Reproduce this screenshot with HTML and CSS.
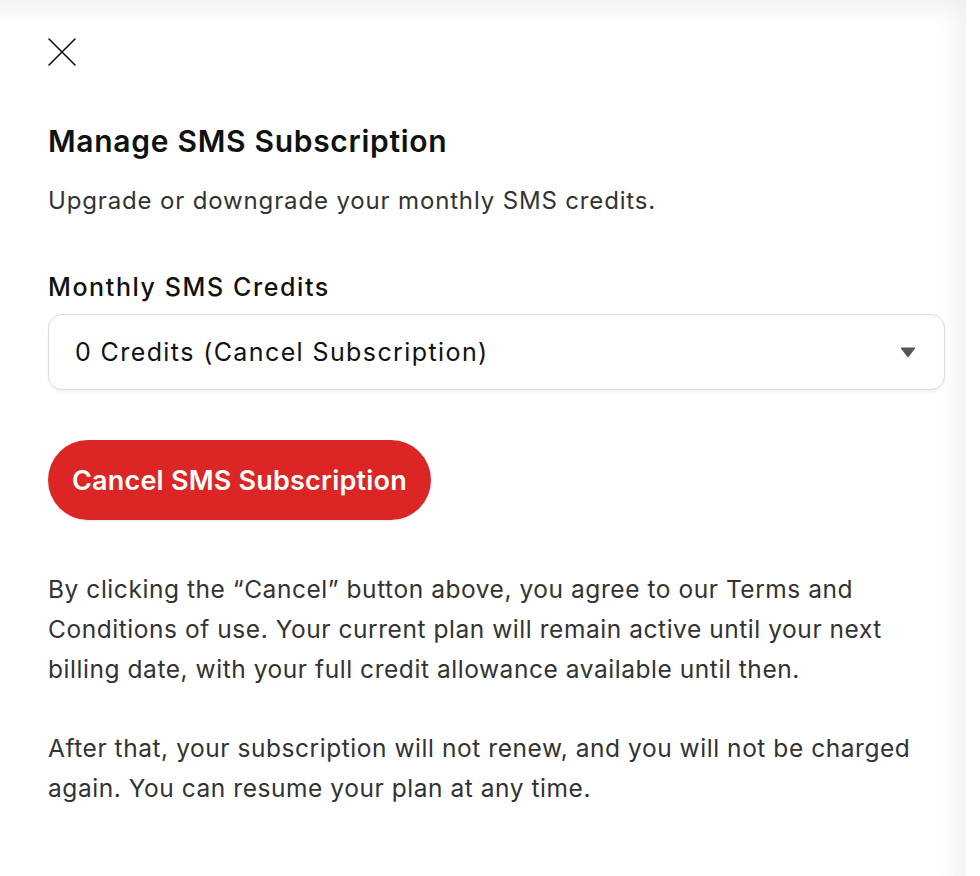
FILE: index.html
```html
<!DOCTYPE html>
<html lang="en">
<head>
<meta charset="utf-8">
<title>Manage SMS Subscription</title>
<link rel="stylesheet" href="styles.css">
</head>
<body>
<div class="panel">
  <button class="close" aria-label="Close">
    <svg width="28" height="28" viewBox="0 0 28 28" fill="none" stroke="#111" stroke-width="1.6" stroke-linecap="round"><path d="M1 1 L27 27 M27 1 L1 27"/></svg>
  </button>
  <h1 class="title">Manage SMS Subscription</h1>
  <p class="subtitle">Upgrade or downgrade your monthly SMS credits.</p>
  <label class="label">Monthly SMS Credits</label>
  <div class="select">
    <span class="select-text">0 Credits (Cancel Subscription)</span>
    <svg class="caret" width="16" height="11" viewBox="0 0 16 11"><path d="M1 1.5 Q0.5 0.5 1.8 0.5 H14.2 Q15.5 0.5 15 1.5 L9 9.6 Q8 10.8 7 9.6 Z" fill="#555"/></svg>
  </div>
  <button class="cancel-btn">Cancel SMS Subscription</button>
  <p class="body">By clicking the “Cancel” button above, you agree to our Terms and Conditions of use. Your current plan will remain active until your next billing date, with your full credit allowance available until then.</p>
  <p class="body">After that, your subscription will not renew, and you will not be charged again. You can resume your plan at any time.</p>
</div>
</body>
</html>
```
FILE: styles.css
```css
html, body {
  margin: 0;
  padding: 0;
  background: #ffffff;
}
body {
  font-family: Inter, "Noto Sans", sans-serif;
  color: #111;
}
.panel {
  width: 966px;
  height: 876px;
  box-sizing: border-box;
  padding: 38px 20px 0 48px;
  background: #fff;
  box-shadow: inset -16px 16px 22px -8px rgba(30, 35, 50, 0.07);
  display: flex;
  flex-direction: column;
  align-items: flex-start;
}
.close {
  border: 0;
  background: none;
  padding: 0;
  width: 28px;
  height: 28px;
  cursor: pointer;
}
.close svg { display: block; }
.title {
  margin: 55px 0 0;
  font-size: 30px;
  font-weight: 600;
  line-height: 40px;
  color: #111;
  letter-spacing: 0.7px;
}
.subtitle {
  margin: 22px 0 0;
  font-size: 24px;
  line-height: 36px;
  color: #333;
  letter-spacing: 0.85px;
}
.label {
  margin-top: 50px;
  font-size: 25px;
  font-weight: 500;
  line-height: 36px;
  color: #111;
  letter-spacing: 1.6px;
}
.select {
  margin-top: 9px;
  width: 897px;
  height: 76px;
  box-sizing: border-box;
  border: 1.5px solid #dcdcdc;
  border-radius: 14px;
  box-shadow: 0 2px 3px rgba(0, 0, 0, 0.06);
  display: flex;
  align-items: center;
  justify-content: space-between;
  padding: 0 28px 0 26px;
}
.select-text {
  font-size: 25px;
  color: #111;
  letter-spacing: 1.4px;
}
.caret { display: block; margin-top: 1px; }
.cancel-btn {
  margin-top: 50px;
  height: 80px;
  padding: 0 24px;
  border: 0;
  border-radius: 40px;
  background: #dc2626;
  color: #fff;
  font-family: inherit;
  font-size: 27px;
  font-weight: 600;
  letter-spacing: 0.2px;
  cursor: pointer;
  box-shadow: 0 1px 2px rgba(0, 0, 0, 0.08);
}
.body {
  margin: 49px 0 0;
  font-size: 24.5px;
  line-height: 40px;
  color: #333;
  letter-spacing: 0.55px;
  max-width: 880px;
}
.body + .body { margin-top: 39px; }
```
